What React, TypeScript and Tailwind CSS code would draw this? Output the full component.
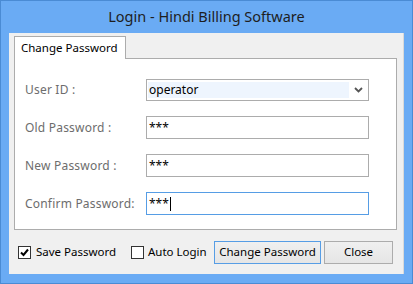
import React from 'react';

const font = { fontFamily: '"Noto Sans", "Open Sans", sans-serif' };

function Field({ label, value, focused }: { label: string; value: string; focused?: boolean }) {
  return (
    <div className="flex items-center h-[23px]">
      <div className="w-[121px] text-[12px] text-[#6d6d6d] tracking-[0.2px]">{label}</div>
      <div
        className={`w-[223px] h-[23px] bg-white border flex items-center pl-[2px] text-[12px] text-black ${
          focused ? 'border-[#569de5]' : 'border-[#acacac]'
        }`}
      >
        <span className="leading-none">{value}</span>
        {focused && <span className="w-px h-[14px] bg-black ml-[1px]" />}
      </div>
    </div>
  );
}

function Check({ checked }: { checked?: boolean }) {
  return (
    <div className="w-[13px] h-[13px] border border-[#333] bg-white flex items-center justify-center shrink-0">
      {checked && (
        <svg width="11" height="11" viewBox="0 0 11 11">
          <path d="M2 5.5 L4.5 8 L9 2.5" fill="none" stroke="#000" strokeWidth="2" />
        </svg>
      )}
    </div>
  );
}

export default function App() {
  return (
    <div style={font} className="w-[413px] h-[284px] bg-[#6aabf4] border border-[#4a8bd4] flex flex-col">
      <div className="h-[32px] flex items-center justify-center text-[14.5px] text-[#1e1e1e] pb-[1px]">
        Login - Hindi Billing Software
      </div>
      <div className="ml-[8px] mr-[8px] h-[241px] bg-[#f0f0f0] border-r border-[#d9d9d9] flex flex-col pt-[3px] pl-[5px] pr-[5px]">
        <div className="flex">
          <div className="w-[112px] h-[23px] bg-white border border-[#acacac] border-b-0 flex items-center pl-[6px] text-[11.5px] text-black relative z-10">
            Change Password
          </div>
        </div>
        <div className="w-[383px] h-[173px] -mt-px bg-white border border-[#acacac] flex flex-col gap-[15px] pl-[10px] pt-[20px]">
          <div className="flex items-center h-[22px]">
            <div className="w-[121px] text-[12px] text-[#6d6d6d] tracking-[0.2px]">User ID :</div>
            <div className="w-[223px] h-[22px] bg-white border border-[#acacac] flex items-center p-px">
              <div className="w-[201px] h-[16px] bg-[#eef5fe] flex items-center pl-[1px] text-[12px] text-black">operator</div>
              <div className="flex-1 flex justify-center">
                <svg width="9" height="6" viewBox="0 0 9 6">
                  <path d="M1 1 L4.5 4.5 L8 1" fill="none" stroke="#555" strokeWidth="1.8" />
                </svg>
              </div>
            </div>
          </div>
          <Field label="Old Password :" value="***" />
          <Field label="New Password :" value="***" />
          <Field label="Confirm Password:" value="***" focused />
        </div>
        <div className="flex items-center h-[44px] pl-[4px] text-[11.5px] text-black">
          <div className="w-[113px] flex items-center">
            <Check checked />
            <span className="ml-[5px]">Save Password</span>
          </div>
          <div className="w-[83px] flex items-center">
            <Check />
            <span className="ml-[4px]">Auto Login</span>
          </div>
          <button className="w-[107px] h-[23px] border border-[#569de5] bg-gradient-to-b from-[#f0f0f0] to-[#e5e5e5] text-[11.5px]">
            Change Password
          </button>
          <button className="ml-[3px] w-[69px] h-[23px] border border-[#acacac] bg-gradient-to-b from-[#f0f0f0] to-[#e5e5e5] text-[11.5px]">
            Close
          </button>
        </div>
      </div>
    </div>
  );
}
